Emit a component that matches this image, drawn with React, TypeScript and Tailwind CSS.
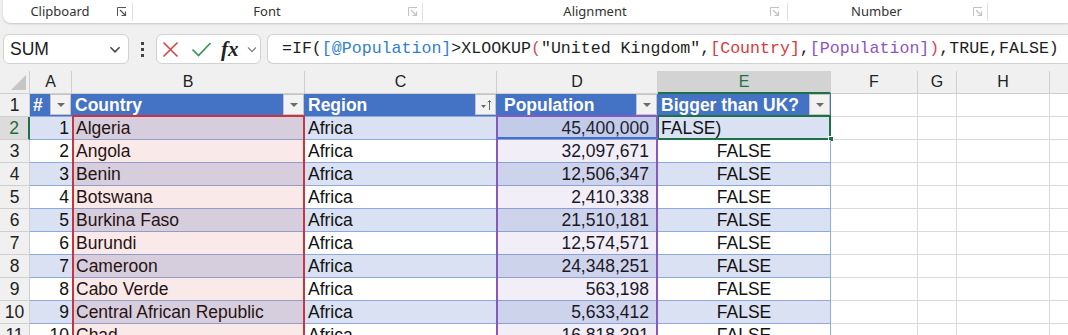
import React from "react";

const FONT = { fontFamily: '"Liberation Sans", Arial, sans-serif' };

function Launcher({ dark }: { dark?: boolean }) {
  const c = dark ? "#555" : "#c2c2c2";
  return (
    <svg width="10" height="10" viewBox="0 0 10 10" className="shrink-0">
      <path d="M0.5 9 V0.5 H9" stroke={c} strokeWidth="1" fill="none" />
      <path d="M3 3 L8.5 8.5" stroke={c} strokeWidth="1.2" fill="none" />
      <path d="M8.5 4.5 V8.5 H4.5" stroke={c} strokeWidth="1.2" fill="none" />
    </svg>
  );
}

function Sep() {
  return <div className="w-px h-[18px] bg-[#e1e1e1] shrink-0" />;
}

function Ribbon() {
  return (
    <div className="h-[23px] pl-[3px] shrink-0">
      <div
        className="h-full bg-white rounded-bl-[8px] shadow-[0_1px_2px_rgba(0,0,0,0.18)] flex items-center text-[13px] text-[#333]"
        style={{ fontFamily: '"Noto Sans", "Open Sans", sans-serif' }}
      >
        <div className="w-[114px] text-center shrink-0">Clipboard</div>
        <Launcher dark />
        <div className="w-[5px] shrink-0" />
        <Sep />
        <div className="w-[268px] text-center shrink-0">Font</div>
        <div className="w-[7px] shrink-0" />
        <Launcher />
        <div className="w-[4px] shrink-0" />
        <Sep />
        <div className="w-[20px] shrink-0" />
        <div className="w-[304px] text-center shrink-0">Alignment</div>
        <div className="w-[23px] shrink-0" />
        <Launcher />
        <div className="w-[7px] shrink-0" />
        <Sep />
        <div className="w-[177px] text-center shrink-0">Number</div>
        <div className="w-[8px] shrink-0" />
        <Launcher />
        <div className="w-[4px] shrink-0" />
        <Sep />
      </div>
    </div>
  );
}

function Chevron({ color = "#555", size = 14 }: { color?: string; size?: number }) {
  return (
    <svg width={size} height={size} viewBox="0 0 14 14">
      <path d="M3 5.5 L7 9.5 L11 5.5" stroke={color} strokeWidth="1.3" fill="none" />
    </svg>
  );
}

function FormulaBar() {
  return (
    <div className="mt-[11px] h-[30px] flex items-stretch shrink-0">
      <div className="ml-[3px] w-[126px] bg-white border border-[#d1d1d1] rounded-[6px] flex items-center pl-[6px] pr-[5px] shrink-0">
        <span className="text-[17.5px] text-[#1a1a1a] flex-1" style={FONT}>
          SUM
        </span>
        <Chevron color="#444" size={16} />
      </div>
      <div className="w-[27px] flex flex-col items-center justify-center gap-[3px] shrink-0">
        <div className="w-[3px] h-[3px] bg-[#444]" />
        <div className="w-[3px] h-[3px] bg-[#444]" />
        <div className="w-[3px] h-[3px] bg-[#444]" />
      </div>
      <div className="w-[105px] bg-white border border-[#d1d1d1] rounded-[6px] flex items-center pl-[5px] shrink-0">
        <svg width="17" height="17" viewBox="0 0 17 17">
          <path d="M1.5 1.5 L15.5 15.5 M15.5 1.5 L1.5 15.5" stroke="#e2423b" strokeWidth="1.6" fill="none" />
        </svg>
        <div className="w-[12px]" />
        <svg width="21" height="18" viewBox="0 0 21 18">
          <path d="M1.5 9.5 L7.5 15.5 L19.5 3" stroke="#2e9b4d" strokeWidth="1.7" fill="none" />
        </svg>
        <div className="w-[9px]" />
        <span
          className="text-[21px] italic text-[#222] leading-none font-semibold"
          style={{ fontFamily: '"Liberation Serif", "Times New Roman", serif' }}
        >
          fx
        </span>
        <div className="ml-[6px]">
          <Chevron color="#888" size={14} />
        </div>
      </div>
      <div className="w-[6px] shrink-0" />
      <div
        className="flex-1 bg-white border border-r-0 border-[#d1d1d1] rounded-l-[6px] flex items-center pl-[14px] text-[16.6px] text-[#1e1e1e] whitespace-nowrap overflow-hidden"
        style={{ fontFamily: '"Liberation Mono", "Courier New", monospace' }}
      >
        <span>=IF(</span>
        <span className="text-[#2f7fd4]">[@Population]</span>
        <span>&gt;XLOOKUP</span>
        <span className="text-[#d8455a]">(</span>
        <span>"United Kingdom",</span>
        <span className="text-[#d93a3a]">[Country]</span>
        <span>,</span>
        <span className="text-[#8e55c2]">[Population]</span>
        <span className="text-[#d8455a]">)</span>
        <span>,TRUE,FALSE)</span>
      </div>
    </div>
  );
}

const rows = [
  ["1", "Algeria", "45,400,000"],
  ["2", "Angola", "32,097,671"],
  ["3", "Benin", "12,506,347"],
  ["4", "Botswana", "2,410,338"],
  ["5", "Burkina Faso", "21,510,181"],
  ["6", "Burundi", "12,574,571"],
  ["7", "Cameroon", "24,348,251"],
  ["8", "Cabo Verde", "563,198"],
  ["9", "Central African Republic", "5,633,412"],
  ["10", "Chad", "16,818,391"],
];

function FilterBtn({ sort }: { sort?: boolean }) {
  return (
    <div className="w-[21px] h-[21px] bg-[#f2f2f2] border border-[#c4c4c4] flex items-center justify-center shrink-0 mr-px">
      {sort ? (
        <svg width="14" height="12" viewBox="0 0 14 12">
          <path d="M2 6 L7 6 L4.5 9 Z" fill="#666" />
          <path d="M10.5 11 V1.5 M8.8 3.3 L10.5 1.5 L12.2 3.3" stroke="#666" strokeWidth="1" fill="none" />
        </svg>
      ) : (
        <svg width="10" height="6" viewBox="0 0 10 6">
          <path d="M1 1 L9 1 L5 5 Z" fill="#6b6b6b" />
        </svg>
      )}
    </div>
  );
}

function EmptyCells() {
  return (
    <>
      <div className="w-[87px] shrink-0 bg-white border-r border-b border-[#dadada]" />
      <div className="w-[39px] shrink-0 bg-white border-r border-b border-[#dadada]" />
      <div className="w-[93px] shrink-0 bg-white border-r border-b border-[#dadada]" />
      <div className="flex-1 bg-white border-b border-[#dadada]" />
    </>
  );
}

function Grid() {
  return (
    <div className="relative mt-[7px] flex flex-col text-[17.5px] text-[#111]" style={FONT}>
      {/* column letters */}
      <div className="flex h-[23px] text-[16px] text-[#222]">
        <div className="w-[30px] shrink-0 border-r border-b border-[#cfcfcf] bg-[#f0f0f0] flex items-end justify-end p-[3px]">
          <svg width="15" height="15" viewBox="0 0 15 15">
            <path d="M15 0 L15 15 L0 15 Z" fill="#c6c6c6" />
          </svg>
        </div>
        {[
          ["A", "w-[42px]"],
          ["B", "w-[233px]"],
          ["C", "w-[192px]"],
          ["D", "w-[161px]"],
        ].map(([l, w]) => (
          <div
            key={l}
            className={`${w} shrink-0 border-r border-b border-[#cfcfcf] bg-[#f0f0f0] flex items-center justify-center`}
          >
            {l}
          </div>
        ))}
        <div className="w-[173px] shrink-0 border-r border-[#cfcfcf] border-b-2 border-b-[#1e7145] bg-[#d3d3d3] flex items-center justify-center text-[#1e7145]">
          E
        </div>
        {[
          ["F", "w-[87px]"],
          ["G", "w-[39px]"],
          ["H", "w-[93px]"],
        ].map(([l, w]) => (
          <div
            key={l}
            className={`${w} shrink-0 border-r border-b border-[#cfcfcf] bg-[#f0f0f0] flex items-center justify-center`}
          >
            {l}
          </div>
        ))}
        <div className="flex-1 border-b border-[#cfcfcf] bg-[#f0f0f0]" />
      </div>

      {/* header row */}
      <div className="flex h-[23px]">
        <div className="w-[30px] shrink-0 border-r border-b border-[#cfcfcf] bg-[#f0f0f0] flex items-center justify-center text-[#222]">
          1
        </div>
        <div className="w-[42px] shrink-0 bg-[#4472c4] border-b border-[#8ea9db] flex items-start text-white font-bold">
          <span className="flex-1 pl-[3px] self-center">#</span>
          <FilterBtn />
        </div>
        <div className="w-[233px] shrink-0 bg-[#4472c4] border-b border-[#8ea9db] flex items-start text-white font-bold">
          <span className="flex-1 pl-[3px] self-center">Country</span>
          <FilterBtn />
        </div>
        <div className="w-[192px] shrink-0 bg-[#4472c4] border-b border-[#8ea9db] flex items-start text-white font-bold">
          <span className="flex-1 pl-[3px] self-center">Region</span>
          <FilterBtn sort />
        </div>
        <div className="w-[161px] shrink-0 bg-[#4472c4] border-b border-[#8ea9db] flex items-start text-white font-bold">
          <span className="flex-1 pl-[7px] self-center">Population</span>
          <FilterBtn />
        </div>
        <div className="w-[173px] shrink-0 bg-[#4472c4] border-b border-[#8ea9db] flex items-start text-white font-bold">
          <span className="flex-1 pl-[3px] self-center whitespace-nowrap">Bigger than UK?</span>
          <FilterBtn />
        </div>
        <EmptyCells />
      </div>

      {rows.map(([n, country, pop], i) => {
        const banded = i % 2 === 0;
        const bg = banded ? "bg-[#d9e1f2]" : "bg-white";
        const active = i === 0;
        return (
          <div key={n} className="flex h-[23px] shrink-0">
            <div
              className={
                active
                  ? "w-[30px] shrink-0 border-r-2 border-r-[#1e7145] border-b border-b-[#cfcfcf] bg-[#dcdcdc] flex items-center justify-center text-[#1e6b40]"
                  : "w-[30px] shrink-0 border-r border-b border-[#cfcfcf] bg-[#f0f0f0] flex items-center justify-center text-[#222]"
              }
            >
              {String(i + 2)}
            </div>
            <div className={`w-[42px] shrink-0 ${bg} border-b border-[#8ea9db] flex items-center justify-end pr-[3px]`}>
              {n}
            </div>
            <div className={`w-[233px] shrink-0 ${bg} border-b border-[#8ea9db] flex items-center pl-[4px] whitespace-nowrap`}>
              {country}
            </div>
            <div className={`w-[192px] shrink-0 ${bg} border-b border-[#8ea9db] flex items-center pl-[3px]`}>
              Africa
            </div>
            <div className={`w-[161px] shrink-0 ${bg} border-b border-[#8ea9db] flex items-center justify-end pr-[9px]`}>
              {pop}
            </div>
            <div
              className={`relative w-[173px] shrink-0 ${bg} border-b border-r border-[#8ea9db] flex items-center ${
                active ? "justify-start pl-[3px]" : "justify-center"
              }`}
            >
              {active ? "FALSE)" : "FALSE"}
              {active && (
                <>
                  <div className="absolute -left-px -top-[2px] w-[174px] h-[25px] border-2 border-[#1e7145]" />
                  <div className="absolute -right-[4px] bottom-[-3px] w-[6px] h-[6px] bg-[#1e7145] border border-white" />
                </>
              )}
            </div>
            <EmptyCells />
          </div>
        );
      })}

      {/* reference highlight overlays */}
      <div className="absolute left-[72px] top-[44px] w-[233px] h-[260px] border-2 border-[#c8343f] bg-[#cd2323]/10 pointer-events-none" />
      <div className="absolute left-[496px] top-[44px] w-[162px] h-[260px] border-2 border-[#8459c0] bg-[#7355b9]/10 pointer-events-none" />
      <div className="absolute left-[498px] top-[46px] w-[158px] h-[22px] border-b-2 border-[#3b6fd1] bg-[#4472c4]/8 pointer-events-none" />
    </div>
  );
}

export default function App() {
  return (
    <div className="w-[1068px] h-[335px] overflow-hidden bg-[#f0f0f0] flex flex-col">
      <Ribbon />
      <FormulaBar />
      <Grid />
    </div>
  );
}
